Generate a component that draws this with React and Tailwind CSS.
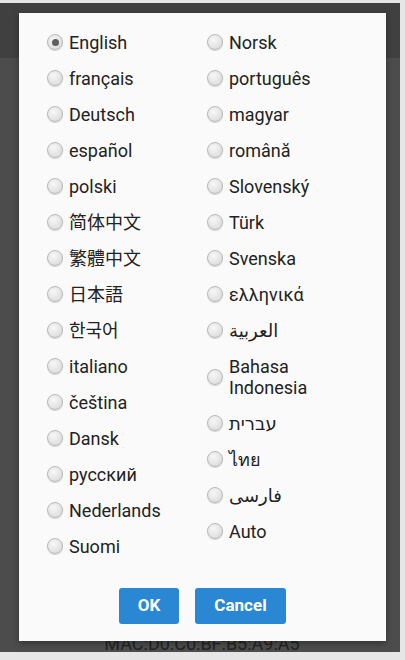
import React from "react";

const left = [
  { t: "English", sel: true },
  { t: "français" },
  { t: "Deutsch" },
  { t: "español" },
  { t: "polski" },
  { t: "简体中文", f: "font-['Roboto','Noto_Sans_CJK_SC',sans-serif]" },
  { t: "繁體中文", f: "font-['Roboto','Noto_Sans_CJK_TC',sans-serif]" },
  { t: "日本語", f: "font-['Roboto','Noto_Sans_CJK_JP',sans-serif]" },
  { t: "한국어", f: "font-['Roboto','Noto_Sans_CJK_KR',sans-serif]" },
  { t: "italiano" },
  { t: "čeština" },
  { t: "Dansk" },
  { t: "русский" },
  { t: "Nederlands" },
  { t: "Suomi" },
];

const right = [
  { t: "Norsk" },
  { t: "português" },
  { t: "magyar" },
  { t: "română" },
  { t: "Slovenský" },
  { t: "Türk" },
  { t: "Svenska" },
  { t: "ελληνικά" },
  { t: "العربية", f: "font-['Noto_Sans','DejaVu_Sans',sans-serif] text-[15px]" },
  { t: ["Bahasa", "Indonesia"] },
  { t: "עברית", f: "font-['DejaVu_Sans','Noto_Sans',sans-serif] text-[17px]" },
  { t: "ไทย", f: "font-['Noto_Sans','DejaVu_Sans',sans-serif] text-[17px]" },
  { t: "فارسی", f: "font-['Noto_Sans','DejaVu_Sans',sans-serif] text-[15px]" },
  { t: "Auto" },
];

function Radio({ sel }) {
  return (
    <span className="w-4 h-4 shrink-0 rounded-full border border-[#b8b8b8] bg-[radial-gradient(circle_at_40%_35%,#f7f7f7,#d6d6d6)] shadow-[0_1px_1px_rgba(0,0,0,0.15)] flex items-center justify-center">
      {sel && <span className="w-[7px] h-[7px] rounded-full bg-[#5f5f5f]" />}
    </span>
  );
}

function Row({ item }) {
  return (
    <div className="flex items-center gap-[6px] py-[7.5px]">
      <Radio sel={item.sel} />
      <span className={"leading-[21px] text-[18px] text-[#222] " + (item.f || "")}>
        {Array.isArray(item.t) ? (
          <>
            {item.t[0]}
            <br />
            {item.t[1]}
          </>
        ) : (
          item.t
        )}
      </span>
    </div>
  );
}

export default function App() {
  return (
    <div className="relative w-[405px] h-[660px] overflow-hidden bg-[#e6e6e6] font-['Roboto',sans-serif]">
      <div className="mt-[3px] w-[400px] h-[649px] bg-[#4c4c4c] flex flex-col">
        <div className="h-[55px] bg-[#404040]" />
        <div className="flex-1" />
        <div className="text-center text-[18px] leading-[16px] text-[#222] pl-[4px]">
          MAC:D0:C0:BF:B5:A9:A5
        </div>
      </div>

      <div className="absolute left-[19px] top-[13px] w-[367px] h-[628px] bg-[#fafafa] shadow-[0_2px_6px_rgba(0,0,0,0.35)] flex flex-col pt-[11px] pl-[28px]">
        <div className="flex">
          <div className="w-[160px] flex flex-col">
            {left.map((it, i) => (
              <Row key={i} item={it} />
            ))}
          </div>
          <div className="flex-1 flex flex-col">
            {right.map((it, i) => (
              <Row key={i} item={it} />
            ))}
          </div>
        </div>
        <div className="mt-[24px] flex justify-center gap-4 pr-[28px]">
          <button className="w-[60px] h-9 rounded-[3px] bg-[#2a87d3] text-white font-bold text-[17px]">
            OK
          </button>
          <button className="w-[91px] h-9 rounded-[3px] bg-[#2a87d3] text-white font-bold text-[17px]">
            Cancel
          </button>
        </div>
      </div>
    </div>
  );
}
